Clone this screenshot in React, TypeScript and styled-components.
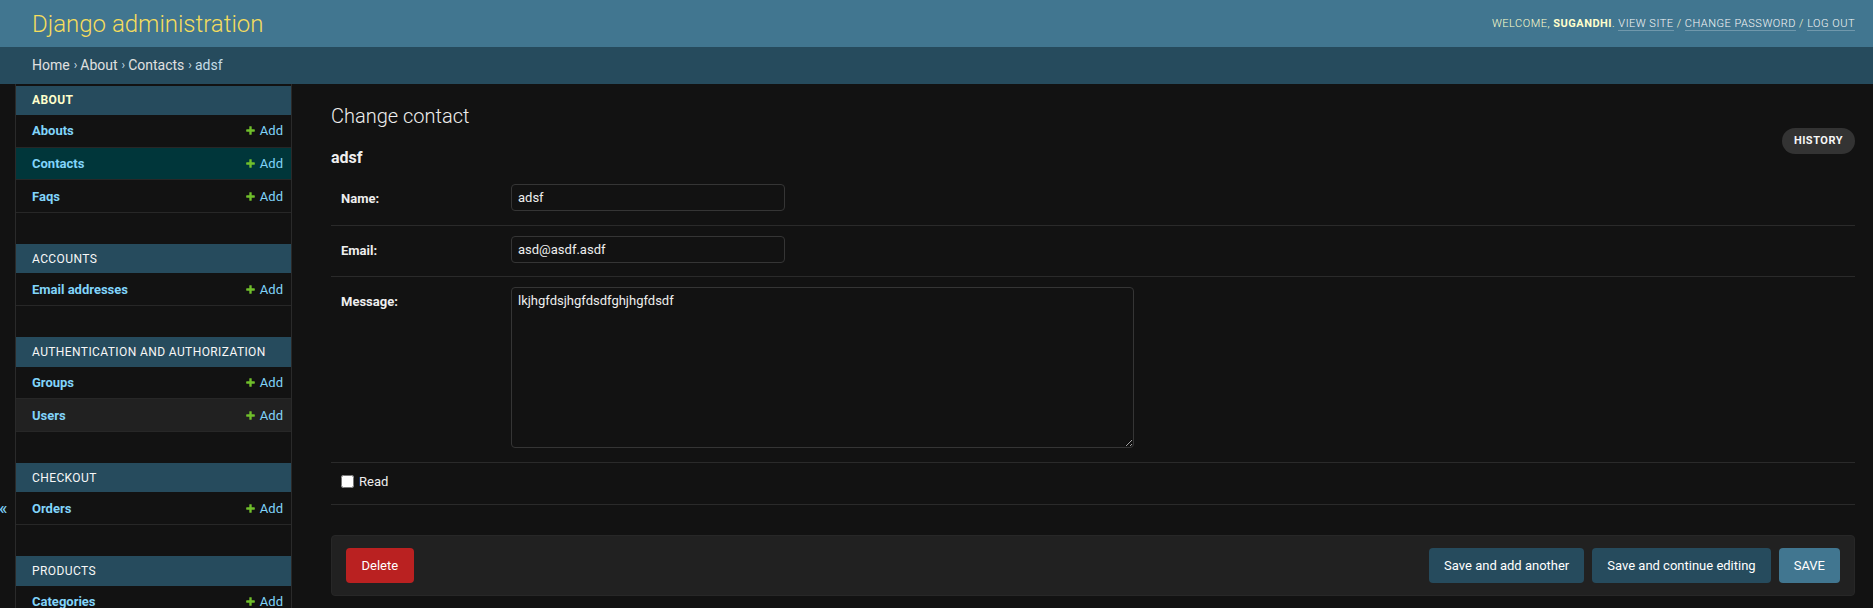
import * as React from "react";
import styled, { createGlobalStyle } from "styled-components";

const GlobalStyle = createGlobalStyle`
  html, body {
    margin: 0;
    padding: 0;
    background: #121212;
    color: #eeeeee;
    font-family: Roboto, "Liberation Sans", Arial, sans-serif;
    font-size: 14px;
  }
  * {
    box-sizing: border-box;
  }
`;

const Header = styled.header`
  display: flex;
  align-items: center;
  justify-content: space-between;
  height: 47px;
  padding: 0 18px 0 32px;
  background: #417690;
`;

const Branding = styled.h1`
  margin: 0;
  font-size: 24px;
  font-weight: 300;
  line-height: 28px;
  color: #f5dd5d;
`;

const UserTools = styled.div`
  font-size: 11px;
  font-weight: 300;
  letter-spacing: 0.5px;
  text-transform: uppercase;
  color: #ffffcc;
  line-height: 16px;

  strong {
    font-weight: 700;
  }
`;

const ToolLink = styled.a`
  color: #f7f7f7;
  text-decoration: none;
  border-bottom: 1px solid rgba(255, 255, 255, 0.25);
`;

const Breadcrumbs = styled.nav`
  display: flex;
  align-items: center;
  height: 37px;
  padding: 0 32px 2px;
  background: #264b5d;
  color: #c4dce8;
  font-size: 14px;
`;

const Crumb = styled.a`
  color: #e0e0e0;
  text-decoration: none;
`;

const Sep = styled.span`
  margin: 0 3px 0 4px;
  font-size: 12px;
`;

const Main = styled.div`
  display: flex;
  align-items: stretch;
  min-height: calc(100vh - 84px);
`;

const ToggleColumn = styled.div`
  flex: 0 0 16px;
  border-right: 1px solid #2a2a2a;
  padding-top: 415px;
  color: #81d4fa;
  font-size: 18px;
  line-height: 18px;
  text-align: left;
  overflow: hidden;

  span {
    display: inline-block;
    margin-left: -1px;
  }
`;

const Sidebar = styled.nav`
  flex: 0 0 276px;
  border-right: 1px solid #2a2a2a;
  padding-top: 1.5px;
`;

const Module = styled.div`
  margin-bottom: 31px;
`;

const Caption = styled.div<{ $current?: boolean }>`
  display: flex;
  align-items: center;
  height: 29.5px;
  padding-left: 16px;
  background: #264b5d;
  color: ${(p) => (p.$current ? "#ffffcc" : "#f7f7f7")};
  font-weight: ${(p) => (p.$current ? 700 : 400)};
  font-size: 12px;
  letter-spacing: 0.4px;
  text-transform: uppercase;
`;

const ModelRow = styled.div<{ $state?: "selected" | "hover" }>`
  display: flex;
  align-items: center;
  justify-content: space-between;
  height: 32.67px;
  padding: 0 8px 0 16px;
  border-bottom: 1px solid #272727;
  background: ${(p) =>
    p.$state === "selected" ? "#00363a" : p.$state === "hover" ? "#212121" : "transparent"};
  font-size: 13px;
`;

const ModelLink = styled.a`
  color: #81d4fa;
  font-weight: 700;
  text-decoration: none;
`;

const AddLink = styled.a`
  display: flex;
  align-items: center;
  gap: 4px;
  color: #81d4fa;
  text-decoration: none;
`;

const Content = styled.main`
  flex: 1;
  padding: 20px 18px 0 39px;
`;

const TitleBar = styled.div`
  display: flex;
  justify-content: space-between;
  align-items: flex-start;
`;

const PageTitle = styled.h1`
  margin: 0 0 20px;
  font-size: 20px;
  font-weight: 300;
  line-height: 24px;
  color: #eeeeee;
`;

const ObjectTitle = styled.h2`
  margin: 0 0 6px;
  font-size: 16px;
  font-weight: 700;
  line-height: 20px;
  color: #eeeeee;
`;

const HistoryLink = styled.a`
  display: flex;
  align-items: center;
  height: 25.4px;
  margin-top: 24.3px;
  padding: 0 12px;
  border-radius: 15px;
  background: #333333;
  color: #f7f7f7;
  font-size: 11px;
  font-weight: 700;
  letter-spacing: 0.5px;
  text-transform: uppercase;
  text-decoration: none;
`;

const Fieldset = styled.fieldset`
  margin: 0;
  padding: 0;
  border: none;
`;

const FormRow = styled.div`
  display: flex;
  align-items: flex-start;
  padding: 10px 10px 13.5px;
  border-bottom: 1px solid #2a2a2a;
`;

const Label = styled.label`
  flex: 0 0 170px;
  padding: 7px 10px 0 0;
  font-size: 13px;
  line-height: 15px;
  font-weight: 700;
  color: #eeeeee;
`;

const TextInput = styled.input`
  width: 274px;
  height: 27px;
  padding: 0 6px;
  border: 1px solid #353535;
  border-radius: 4px;
  background: #121212;
  color: #eeeeee;
  font-family: inherit;
  font-size: 13px;
`;

const TextArea = styled.textarea`
  width: 623px;
  height: 161px;
  padding: 5px 6px;
  border: 1px solid #353535;
  border-radius: 4px;
  background: #121212;
  color: #eeeeee;
  font-family: inherit;
  font-size: 13px;
  line-height: 15px;
`;

const CheckRow = styled.div`
  display: flex;
  align-items: center;
  height: 42px;
  padding: 0 10px 3px;
  border-bottom: 1px solid #2a2a2a;
`;

const Checkbox = styled.input`
  width: 13px;
  height: 13px;
  margin: 0;
`;

const CheckLabel = styled.label`
  padding-left: 5px;
  font-size: 13px;
  color: #eeeeee;
`;

const SubmitRow = styled.div`
  display: flex;
  align-items: center;
  gap: 8px;
  margin-top: 30px;
  padding: 12px 14px;
  border: 1px solid #272727;
  border-radius: 4px;
  background: #212121;
`;

const DeleteLink = styled.a`
  display: flex;
  align-items: center;
  height: 35px;
  margin-right: auto;
  padding: 0 15.5px;
  border-radius: 4px;
  background: #ba2121;
  color: #ffffff;
  font-size: 13px;
  text-decoration: none;
`;

const SubmitButton = styled.button<{ $default?: boolean }>`
  height: 35px;
  padding: 0 15px;
  border: none;
  border-radius: 4px;
  background: ${(p) => (p.$default ? "#417690" : "#264b5d")};
  color: #ffffff;
  font-family: inherit;
  font-size: 13px;
  text-transform: ${(p) => (p.$default ? "uppercase" : "none")};
`;

const PlusIcon = () => (
  <svg width="11" height="11" viewBox="0 0 1792 1792">
    <path
      fill="#70bf2b"
      d="M1600 796v192q0 40-28 68t-68 28h-416v416q0 40-28 68t-68 28h-192q-40 0-68-28t-28-68v-416h-416q-40 0-68-28t-28-68v-192q0-40 28-68t68-28h416v-416q0-40 28-68t68-28h192q40 0 68 28t28 68v416h416q40 0 68 28t28 68z"
    />
  </svg>
);

type Model = { name: string; state?: "selected" | "hover" };
type App = { label: string; current?: boolean; models: Model[] };

const apps: App[] = [
  {
    label: "About",
    current: true,
    models: [{ name: "Abouts" }, { name: "Contacts", state: "selected" }, { name: "Faqs" }],
  },
  { label: "Accounts", models: [{ name: "Email addresses" }] },
  {
    label: "Authentication and Authorization",
    models: [{ name: "Groups" }, { name: "Users", state: "hover" }],
  },
  { label: "Checkout", models: [{ name: "Orders" }] },
  { label: "Products", models: [{ name: "Categories" }, { name: "Products" }] },
];

export default function App() {
  return (
    <>
      <GlobalStyle />
      <Header>
        <Branding>Django administration</Branding>
        <UserTools>
          Welcome, <strong>sugandhi</strong>. <ToolLink href="#">View site</ToolLink> /{" "}
          <ToolLink href="#">Change password</ToolLink> / <ToolLink href="#">Log out</ToolLink>
        </UserTools>
      </Header>
      <Breadcrumbs>
        <Crumb href="#">Home</Crumb>
        <Sep>›</Sep>
        <Crumb href="#">About</Crumb>
        <Sep>›</Sep>
        <Crumb href="#">Contacts</Crumb>
        <Sep>›</Sep>
        adsf
      </Breadcrumbs>
      <Main>
        <ToggleColumn>
          <span>«</span>
        </ToggleColumn>
        <Sidebar>
          {apps.map((app) => (
            <Module key={app.label}>
              <Caption $current={app.current}>{app.label}</Caption>
              {app.models.map((m) => (
                <ModelRow key={m.name} $state={m.state}>
                  <ModelLink href="#">{m.name}</ModelLink>
                  <AddLink href="#">
                    <PlusIcon />
                    Add
                  </AddLink>
                </ModelRow>
              ))}
            </Module>
          ))}
        </Sidebar>
        <Content>
          <TitleBar>
            <div>
              <PageTitle>Change contact</PageTitle>
              <ObjectTitle>adsf</ObjectTitle>
            </div>
            <HistoryLink href="#">History</HistoryLink>
          </TitleBar>
          <Fieldset>
            <FormRow>
              <Label>Name:</Label>
              <TextInput defaultValue="adsf" />
            </FormRow>
            <FormRow>
              <Label>Email:</Label>
              <TextInput defaultValue="asd@asdf.asdf" />
            </FormRow>
            <FormRow>
              <Label>Message:</Label>
              <TextArea defaultValue="lkjhgfdsjhgfdsdfghjhgfdsdf" />
            </FormRow>
            <CheckRow>
              <Checkbox type="checkbox" id="read" />
              <CheckLabel htmlFor="read">Read</CheckLabel>
            </CheckRow>
          </Fieldset>
          <SubmitRow>
            <DeleteLink href="#">Delete</DeleteLink>
            <SubmitButton>Save and add another</SubmitButton>
            <SubmitButton>Save and continue editing</SubmitButton>
            <SubmitButton $default>Save</SubmitButton>
          </SubmitRow>
        </Content>
      </Main>
    </>
  );
}
